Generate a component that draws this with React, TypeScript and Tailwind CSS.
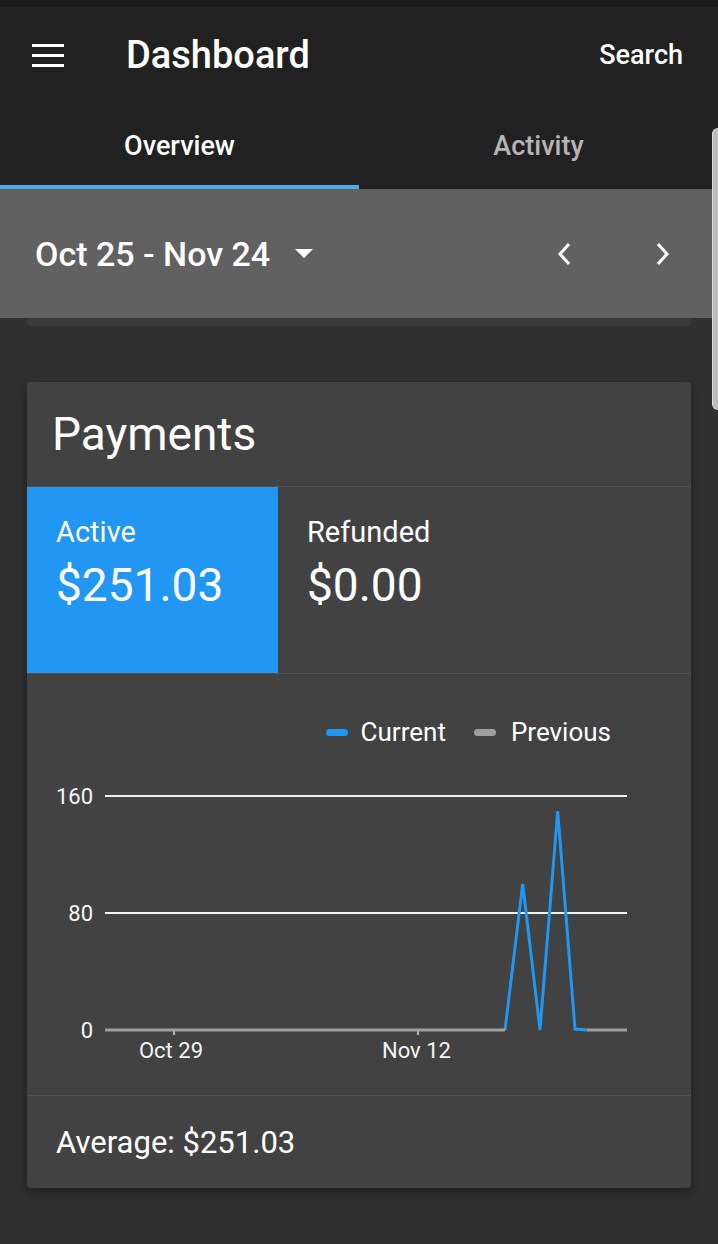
import React from "react";

const Chevron = ({ dir }: { dir: "left" | "right" }) => (
  <svg width="16" height="24" viewBox="0 0 16 24">
    <path
      d={dir === "left" ? "M13 2 L4 12 L13 22" : "M3 2 L12 12 L3 22"}
      fill="none"
      stroke="#fff"
      strokeWidth="3"
    />
  </svg>
);

const PaymentsChart = () => {
  return (
    <svg width="664" height="350" viewBox="0 71 664 350" className="block">
      <line x1="78" y1="122" x2="600" y2="122" stroke="#f2f2f2" strokeWidth="2" />
      <line x1="78" y1="239" x2="600" y2="239" stroke="#f2f2f2" strokeWidth="2" />
      <line x1="147" y1="356" x2="147" y2="361" stroke="#e0e0e0" strokeWidth="1.5" />
      <line x1="391" y1="356" x2="391" y2="361" stroke="#e0e0e0" strokeWidth="1.5" />
      <polyline
        points="478,356 495.7,210 513,356 530.7,137 548,355 560,356"
        fill="none"
        stroke="#2196f3"
        strokeWidth="3"
        strokeLinejoin="miter"
      />
      <line x1="78" y1="356" x2="478" y2="356" stroke="#9e9e9e" strokeWidth="3" />
      <line x1="560" y1="356" x2="600" y2="356" stroke="#9e9e9e" strokeWidth="3" />
      <g fill="#f5f5f5" fontSize="22" fontFamily="Roboto, sans-serif">
        <text x="66" y="130" textAnchor="end">160</text>
        <text x="66" y="247" textAnchor="end">80</text>
        <text x="66" y="364" textAnchor="end">0</text>
        <text x="144" y="384" textAnchor="middle">Oct 29</text>
        <text x="389.5" y="384" textAnchor="middle">Nov 12</text>
      </g>
    </svg>
  );
};

const App = () => {
  return (
    <div className="relative min-h-screen bg-[#303030] font-['Roboto',sans-serif] text-white pb-[56px]">
      <div className="h-[7px] bg-[#1b1b1b]"></div>
      <header className="bg-[#212121]">
        <div className="flex items-center h-[96px] pl-[32px] pr-[35px]">
          <div className="flex flex-col gap-[7px] w-[32px]">
            <div className="h-[3px] bg-white"></div>
            <div className="h-[3px] bg-white"></div>
            <div className="h-[3px] bg-white"></div>
          </div>
          <h1 className="ml-[62px] text-[38px] leading-none font-medium">Dashboard</h1>
          <div className="ml-auto text-[27px] leading-none font-medium">Search</div>
        </div>
        <div className="flex h-[86px]">
          <div className="flex-1 flex items-center justify-center pt-[4px] border-b-[4px] border-[#4aaee6] text-[27px] leading-none font-medium">
            Overview
          </div>
          <div className="flex-1 flex items-center justify-center pt-[4px] border-b-[4px] border-transparent text-[27px] leading-none font-medium text-[#b5b5b5]">
            Activity
          </div>
        </div>
      </header>

      <div className="flex items-center h-[129px] bg-[#616161] pl-[35px]">
        <span className="text-[34px] leading-none font-medium">Oct 25 - Nov 24</span>
        <svg width="18" height="10" viewBox="0 0 18 10" className="ml-[25px]">
          <path d="M0 0 L18 0 L9 9 Z" fill="#fff" />
        </svg>
        <div className="ml-auto flex items-center gap-[83px] pr-[47px]">
          <Chevron dir="left" />
          <Chevron dir="right" />
        </div>
      </div>
      <div className="mx-[27px] h-[8px] bg-[#3a3a3a] rounded-b-[4px]"></div>

      <main className="mx-[27px] mt-[56px] bg-[#424242] rounded-[4px] shadow-[0_4px_10px_rgba(0,0,0,0.4)] overflow-hidden">
        <div className="h-[105px] flex items-center px-[25px] border-b border-[#505050]">
          <h2 className="text-[46px] leading-none">Payments</h2>
        </div>
        <div className="flex h-[187px] border-b border-[#505050]">
          <div className="w-[251px] bg-[#2196f3] pl-[29px] pt-[31px]">
            <div className="text-[29px] leading-none">Active</div>
            <div className="mt-[15px] text-[46px] leading-none">$251.03</div>
          </div>
          <div className="flex-1 pl-[29px] pt-[31px]">
            <div className="text-[29px] leading-none">Refunded</div>
            <div className="mt-[15px] text-[46px] leading-none">$0.00</div>
          </div>
        </div>
        <div className="flex flex-col h-[422px] border-b border-[#505050]">
          <div className="mt-[45px] h-[26px] flex items-center justify-end pr-[80px] gap-[28px] text-[26px] leading-none">
            <div className="flex items-center gap-[13px]">
              <div className="w-[22px] h-[7px] rounded-full bg-[#2196f3]"></div>
              <span>Current</span>
            </div>
            <div className="flex items-center gap-[15px]">
              <div className="w-[22px] h-[7px] rounded-full bg-[#9e9e9e]"></div>
              <span>Previous</span>
            </div>
          </div>
          <PaymentsChart />
        </div>
        <div className="h-[92px] flex items-center pl-[29px]">
          <span className="text-[31px] leading-none">Average: $251.03</span>
        </div>
      </main>

      <div className="absolute right-0 top-[128px] w-[6px] h-[282px] bg-[#bdbdbd] border-l border-t border-[#e0e0e0] rounded-tl-[6px] rounded-bl-[6px]"></div>
    </div>
  );
};

export default App;
